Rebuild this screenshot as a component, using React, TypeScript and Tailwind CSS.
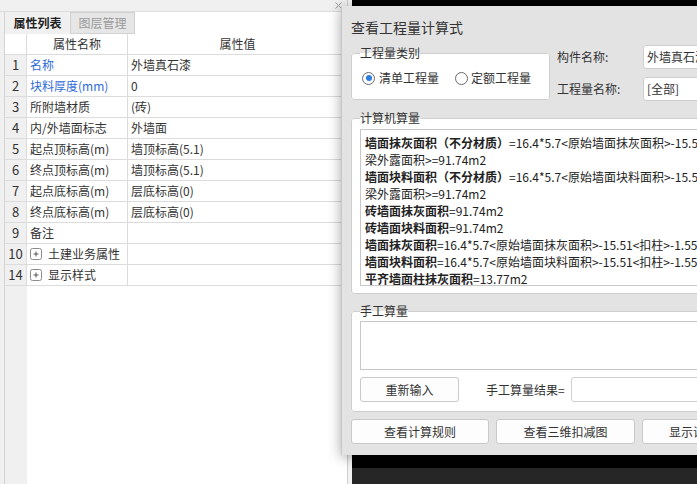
import React from "react";

const rows: { n: string; name: string; value: string; blue?: boolean; group?: boolean }[] = [
  { n: "1", name: "名称", value: "外墙真石漆", blue: true },
  { n: "2", name: "块料厚度(mm)", value: "0", blue: true },
  { n: "3", name: "所附墙材质", value: "(砖)" },
  { n: "4", name: "内/外墙面标志", value: "外墙面" },
  { n: "5", name: "起点顶标高(m)", value: "墙顶标高(5.1)" },
  { n: "6", name: "终点顶标高(m)", value: "墙顶标高(5.1)" },
  { n: "7", name: "起点底标高(m)", value: "层底标高(0)" },
  { n: "8", name: "终点底标高(m)", value: "层底标高(0)" },
  { n: "9", name: "备注", value: "" },
  { n: "10", name: "土建业务属性", value: "", group: true },
  { n: "14", name: "显示样式", value: "", group: true },
];

const calcLines: [string, string][] = [
  ["墙面抹灰面积（不分材质）", "=16.4*5.7<原始墙面抹灰面积>-15.51<扣柱>-1.55<扣"],
  ["", "梁外露面积>=91.74m2"],
  ["墙面块料面积（不分材质）", "=16.4*5.7<原始墙面块料面积>-15.51<扣柱>-1.55<扣"],
  ["", "梁外露面积>=91.74m2"],
  ["砖墙面抹灰面积", "=91.74m2"],
  ["砖墙面块料面积", "=91.74m2"],
  ["墙面抹灰面积", "=16.4*5.7<原始墙面抹灰面积>-15.51<扣柱>-1.55<扣梁>"],
  ["墙面块料面积", "=16.4*5.7<原始墙面块料面积>-15.51<扣柱>-1.55<扣梁>"],
  ["平齐墙面柱抹灰面积", "=13.77m2"],
];

const PlusBox = () => (
  <svg width="12" height="12" viewBox="0 0 12 12" className="shrink-0">
    <rect x="0.5" y="0.5" width="11" height="11" rx="2" fill="white" stroke="#8a8a8a" />
    <path d="M3.5 6h5M6 3.5v5" stroke="#555" strokeWidth="1" />
  </svg>
);

const Radio = ({ checked }: { checked?: boolean }) => (
  <span className="w-[13px] h-[13px] rounded-full border border-[#6b6b6b] bg-white flex items-center justify-center shrink-0">
    {checked && <span className="w-[6px] h-[6px] rounded-full bg-[#2b7de0]" />}
  </span>
);

const Btn = ({ label, className }: { label: string; className: string }) => (
  <button className={"shrink-0 h-[25px] bg-[#fdfdfd] border border-[#c9c9c9] rounded-[3px] text-[12px] text-[#333] whitespace-nowrap " + className}>
    {label}
  </button>
);

export default function App() {
  return (
    <div className="relative w-[697px] h-[484px] overflow-hidden flex bg-[#262626] font-['Noto_Sans_CJK_SC',sans-serif] text-[12px] text-[#333]">
      {/* left property panel */}
      <div className="w-[348px] h-full flex flex-col bg-[#f0f0f0] border-r border-[#d0d0d0]">
        <div className="h-[12px] border-b border-[#dcdcdc] relative shrink-0">
          <svg width="7" height="7" viewBox="0 0 7 7" className="absolute right-[5px] top-[2px]">
            <path d="M0.5 0.5l6 6M6.5 0.5l-6 6" stroke="#9a9a9a" strokeWidth="1" />
          </svg>
        </div>
        <div className="flex-1 ml-[4px] flex flex-col bg-white border-l border-[#d4d4d4]">
          <div className="flex h-[22px] shrink-0">
            <div className="w-[65px] bg-[#f0f0f0] flex items-center justify-center font-bold text-[#222] leading-[22px]">属性列表</div>
            <div className="w-[65px] bg-[#e6e6e6] border border-[#d2d2d2] flex items-center justify-center text-[#9a9a9a] leading-[20px]">图层管理</div>
          </div>
          <div className="flex-1 flex flex-col">
            <div className="grid grid-cols-[22px_101px_1fr] h-[21px] shrink-0">
              <div className="bg-white border-r border-b border-[#dcdcdc]" />
              <div className="border-r border-b border-[#dcdcdc] flex items-center justify-center">属性名称</div>
              <div className="border-b border-[#dcdcdc] flex items-center justify-center">属性值</div>
            </div>
            {rows.map((r) => (
              <div key={r.n} className="grid grid-cols-[22px_101px_1fr] h-[21px] shrink-0">
                <div className="bg-[#f0f0f0] border-r border-b border-[#dcdcdc] flex items-center justify-center text-[13px]">{r.n}</div>
                <div className={"border-r border-b border-[#dcdcdc] flex items-center pl-[3px] gap-[6px] whitespace-nowrap " + (r.blue ? "text-[#2f6bd8]" : "text-[#333]")}>
                  {r.group && <PlusBox />}
                  {r.name}
                </div>
                <div className="border-b border-[#dcdcdc] flex items-center pl-[3px] whitespace-nowrap">{r.value}</div>
              </div>
            ))}
            <div className="flex-1 grid grid-cols-[22px_1fr]">
              <div className="bg-[#f0f0f0]" />
              <div />
            </div>
          </div>
        </div>
      </div>
      <div className="w-[4px] h-full bg-[#f3f3f3]" />
      {/* viewport canvas */}
      <div className="flex-1 flex flex-col">
        <div className="h-[468px] bg-black" />
        <div className="flex-1 bg-[#262626]" />
      </div>

      {/* dialog */}
      <div className="absolute left-[341px] top-[6px] w-[480px] h-[449px] bg-[#e3e3e3] border-l border-[#c8c8c8] shadow-[0_2px_12px_rgba(0,0,0,0.35)] pl-[9px] pt-[11px] flex flex-col">
        <div className="text-[14px] leading-[20px] text-[#333]">查看工程量计算式</div>

        <div className="mt-[8px] flex items-start">
          <fieldset className="shrink-0 mt-[1px] w-[199px] bg-white border border-[#cfcfcf] rounded-[3px] px-[8px] pb-[12px]">
            <legend className="px-0 leading-[14px] text-[12px]">工程量类别</legend>
            <div className="ml-[2px] mt-[9px] flex items-center h-[18px] whitespace-nowrap">
              <Radio checked />
              <span className="ml-[4px]">清单工程量</span>
              <span className="ml-[16px]"><Radio /></span>
              <span className="ml-[3px]">定额工程量</span>
            </div>
          </fieldset>
          <div className="shrink-0 ml-[7px] flex flex-col gap-[8px]">
            <div className="flex items-center h-[24px] whitespace-nowrap">
              <span className="w-[86px]">构件名称:</span>
              <div className="w-[120px] h-[24px] bg-white border border-[#cfcfcf] rounded-[3px] pl-[3px] flex items-center">外墙真石漆</div>
            </div>
            <div className="flex items-center h-[24px] whitespace-nowrap">
              <span className="w-[86px]">工程量名称:</span>
              <div className="w-[120px] h-[24px] bg-white border border-[#cfcfcf] rounded-[3px] pl-[3px] flex items-center">[全部]</div>
            </div>
          </div>
        </div>

        <fieldset className="mt-[10px] w-[420px] bg-white border border-[#cfcfcf] rounded-[3px] px-[8px] pt-[4px] pb-[7px]">
          <legend className="px-0 leading-[14px] text-[12px]">计算机算量</legend>
          <div className="h-[157px] border border-[#c8c8c8] pl-[4px] pt-[4px] overflow-hidden">
            {calcLines.map(([b, t], i) => (
              <div key={i} className="leading-[17px] whitespace-nowrap text-[#222]">
                {b && <span className="font-bold">{b}</span>}
                {t}
              </div>
            ))}
          </div>
        </fieldset>

        <fieldset className="mt-[10px] w-[420px] bg-white border border-[#cfcfcf] rounded-[3px] px-[8px] pt-[3px] pb-[9px]">
          <legend className="px-0 leading-[14px] text-[12px]">手工算量</legend>
          <div className="h-[49px] border border-[#c8c8c8]" />
          <div className="mt-[7px] flex items-center whitespace-nowrap">
            <Btn label="重新输入" className="w-[99px]" />
            <span className="shrink-0 ml-[27px]">手工算量结果=</span>
            <div className="shrink-0 ml-[6px] w-[200px] h-[25px] bg-white border border-[#cfcfcf] rounded-[3px]" />
          </div>
        </fieldset>

        <div className="mt-[7px] flex gap-[7px]">
          <Btn label="查看计算规则" className="w-[138px]" />
          <Btn label="查看三维扣减图" className="w-[139px]" />
          <Btn label="显示详细计算式" className="w-[138px]" />
        </div>
      </div>
    </div>
  );
}
